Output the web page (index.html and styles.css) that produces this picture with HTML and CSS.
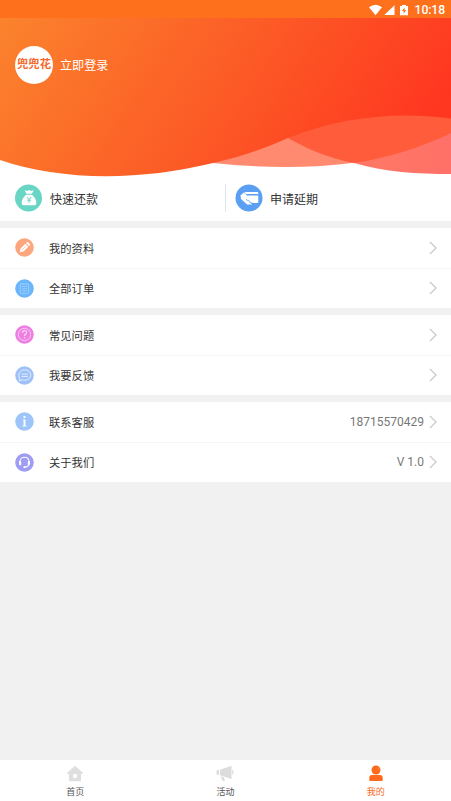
FILE: index.html
```
<!DOCTYPE html>
<html lang="zh-CN">
<head>
<meta charset="utf-8">
<title>我的</title>
<link rel="stylesheet" href="styles.css">
</head>
<body>
<div class="app">
  <div class="status">
    <svg width="41" height="14" viewBox="0 0 41 14" fill="#fff">
      <path d="M0 4.200Q6.500-.8 13 4.200L6.500 12.300Z"/>
      <path d="M25.500 2.300V12H15.300Z"/>
      <path fill-rule="evenodd" d="M31 3h2V2h4v1h2v9.200h-8ZM35.600 4.500 33 8h1.600v2.800L37.200 7h-1.600Z"/>
    </svg>
    <span class="clock">10:18</span>
  </div>
  <header class="hero">
    <svg class="waves" width="451" height="159" viewBox="0 18 451 159">
      <defs>
        <linearGradient id="sky" gradientUnits="userSpaceOnUse" x1="0" y1="18" x2="370" y2="260">
          <stop offset="0" stop-color="#fb832d"/>
          <stop offset=".5" stop-color="#fc5c26"/>
          <stop offset=".95" stop-color="#ff3620"/>
        </linearGradient>
        <linearGradient id="pink" x1="0" x2="1" y1="0" y2="0">
          <stop offset="0" stop-color="#ff7965"/>
          <stop offset="1" stop-color="#ff7068"/>
        </linearGradient>
      </defs>
      <path fill="#ff8a70" d="M213 162C240 157 263 148 288 137L310 140 356 162.500C308 169 260 168 213 163Z"/>
      <path fill="url(#pink)" d="M352 162C387 156 420 146 451 131V174C418 174 384 172 354 163Z"/>
      <path fill="#ff5c3b" d="M288 138L300 131C350 114 400 112 451 117V133C420 148 387 158 354 163C328 158 307 149 288 138Z"/>
      <path fill="url(#sky)" d="M0 18H451V118.500C395 111 340 117 288 138C263 149 240 157 213 163C136 182 58 180 0 160Z"/>
    </svg>
    <div class="profile">
      <div class="avatar"><span>兜兜花</span></div>
      <span class="login">立即登录</span>
    </div>
  </header>
  <section class="quick">
    <div class="quick-item">
      <svg width="28" height="28" viewBox="0 0 28 28">
        <circle cx="13.500" cy="14" r="13.500" fill="#68d5c5"/>
        <path fill="#fff" d="M9.600 6.200l2.500.8 2-1 2 1 2.600-.8-1.800 3.600h-5.500ZM11.200 10.700h5.800c2.700 2.100 4.300 5 4.300 8.100 0 1.800-.7 2.400-2.300 2.400H9c-1.600 0-2.300-.6-2.300-2.400 0-3.100 1.700-6 4.500-8.100Z"/>
        <path fill="none" stroke="#68d5c5" stroke-width="1" d="M12 13l2.100 2.500 2.100-2.500M14.100 15.500v3.500M12 16.200h4.200"/>
      </svg>
      <span>快速还款</span>
    </div>
    <div class="quick-item extend">
      <svg width="28" height="28" viewBox="0 0 28 28">
        <circle cx="14" cy="14" r="13.500" fill="#5b9ff2"/>
        <path fill="#fff" d="M9.500 8h12.800q1 0 1 1v1H11ZM12 11.500h11.300V18q0 1-1 1h-4.500ZM5.500 11.200 9 8.600l9.300 9.200-1.200 1-3.600-1.400 3.800 3.200h-5.200L6 15Z"/>
        <path fill="none" stroke="#5b9ff2" stroke-width=".8" d="M11 15.500l4 2"/>
      </svg>
      <span>申请延期</span>
    </div>
  </section>
  <section class="group">
    <div class="row">
      <svg class="icon" viewBox="0 0 20 20"><circle cx="10" cy="10" r="9.800" fill="#fda57c"/><path fill="#fff" d="m5 15 .9-4L10.800 6l3.200 3.200-5 4.900ZM11.500 5.300l1-.9q.6-.5 1.200 0l2 2q.5.6 0 1.200l-1 .9Z"/><path stroke="#fda57c" stroke-width=".6" d="m7.200 12.800 4.300-4.300"/></svg>
      <span class="label">我的资料</span>
      <svg class="arrow" viewBox="0 0 8 14"><path d="m1 1 6 6-6 6"/></svg>
    </div>
    <div class="row">
      <svg class="icon" viewBox="0 0 20 20"><circle cx="10" cy="10" r="9.800" fill="#6bb5fa"/><g fill="none" stroke="#a3d3ff" stroke-width=".9"><rect x="5.600" y="5.200" width="8.800" height="10" rx="1"/><path d="M7.500 4.500v1.500M12.500 4.500v1.500M7.500 8h5M7.500 10.300h5M7.500 12.600h5"/></g></svg>
      <span class="label">全部订单</span>
      <svg class="arrow" viewBox="0 0 8 14"><path d="m1 1 6 6-6 6"/></svg>
    </div>
  </section>
  <section class="group">
    <div class="row">
      <svg class="icon" viewBox="0 0 20 20"><circle cx="10" cy="10" r="9.800" fill="#ec7fe0"/><g fill="none" stroke="#ffd0fa"><circle cx="10" cy="10" r="6.500" stroke-width=".9"/><path stroke-width="1.300" d="M7.700 8.300Q7.900 6 10 6t2.300 2q0 1.100-1.400 1.900-.9.500-.9 1.600M10 12.700V14.200"/></g></svg>
      <span class="label">常见问题</span>
      <svg class="arrow" viewBox="0 0 8 14"><path d="m1 1 6 6-6 6"/></svg>
    </div>
    <div class="row">
      <svg class="icon" viewBox="0 0 20 20"><circle cx="10" cy="10" r="9.800" fill="#9fc1f8"/><g fill="none" stroke="#e2efff"><path d="M4.600 15.800 5 13C2.200 9 5.300 4 10.300 4c3.500 0 6.300 2.400 6.300 5.500s-2.800 5.600-6.300 5.600c-1 0-1.900-.2-2.700-.6Z"/><path d="M7 8.600h6.600M7 11h6.600"/></g></svg>
      <span class="label">我要反馈</span>
      <svg class="arrow" viewBox="0 0 8 14"><path d="m1 1 6 6-6 6"/></svg>
    </div>
  </section>
  <section class="group">
    <div class="row">
      <svg class="icon" viewBox="0 0 20 20"><circle cx="10" cy="10" r="9.800" fill="#9dc5fa"/><path fill="#fff" d="M9 4.300h2v2H9ZM8.300 7.800H11V14.200h1v1H8v-1h1V8.800h-.7Z"/></svg>
      <span class="label">联系客服</span>
      <span class="value">18715570429</span>
      <svg class="arrow" viewBox="0 0 8 14"><path d="m1 1 6 6-6 6"/></svg>
    </div>
    <div class="row">
      <svg class="icon" viewBox="0 0 20 20"><circle cx="10" cy="10" r="9.800" fill="#9f9cf4"/><path fill="none" stroke="#fff" stroke-width="1.100" d="M5.300 10V9C5.300 3 14.700 3 14.700 9v1.500c0 3-1.500 4.300-4.200 4.300"/><path fill="#fff" d="M4.300 8.500h1.200q1 0 1 1V12q0 1-1 1-1.200 0-1.200-1.200ZM15.700 8.500h-1.200q-1 0-1 1V12q0 1 1 1 1.200 0 1.200-1.200ZM9 13.900h2.300v1.800H9Z"/></svg>
      <span class="label">关于我们</span>
      <span class="value">V 1.0</span>
      <svg class="arrow" viewBox="0 0 8 14"><path d="m1 1 6 6-6 6"/></svg>
    </div>
  </section>
  <nav class="tabs">
    <div class="tab">
      <svg width="18" height="17" viewBox="0 0 18 17"><path fill="#dfdfdf" fill-rule="evenodd" d="M9 .8 17.200 8l-.8 1H15v6.500q0 .8-.8.8H3.800q-.8 0-.8-.8V9H1.600L.8 8ZM9 8.800a2.200 2.200 0 0 0 0 4.400 2.200 2.200 0 0 0 0-4.400Z"/></svg>
      <span>首页</span>
    </div>
    <div class="tab">
      <svg width="18" height="17" viewBox="0 0 18 17"><path fill="#dcdcdc" d="M.5 6.300q0-1 1-1.200l1.500-.3v5.300l-1.500-.4q-1-.3-1-1.300ZM4 4.700 15.500.8V14L4 10.300ZM16.200 4.500q1.300.6 1.300 2.700t-1.300 2.700ZM4.500 11.300l3.200 1 1.300 3q-1.800 1.500-2.600 0Z"/></svg>
      <span>活动</span>
    </div>
    <div class="tab active">
      <svg width="18" height="17" viewBox="0 0 18 17"><circle cx="9" cy="5" r="4.500" fill="#fd6a1d"/><path fill="#fd6a1d" d="M5 10h8q2.700 0 2.700 2.700v2.500q0 .8-.8.8H3.100q-.8 0-.8-.8v-2.500Q2.300 10 5 10Z"/><path fill="none" stroke="#ffb58c" stroke-width=".7" d="M10.500 2.500q1 .7 1 1.800"/></svg>
      <span>我的</span>
    </div>
  </nav>
</div>
</body>
</html>
```

FILE: styles.css
```
* { box-sizing: border-box; }

body {
  margin: 0;
  background: #f1f1f1;
  color: #333;
  font-family: Roboto, "Noto Sans CJK SC", sans-serif;
}

svg { display: block; flex: none; }

.app {
  display: flex;
  flex-direction: column;
  width: 451px;
  height: 801px;
  overflow: hidden;
}

.status {
  display: flex;
  flex: none;
  align-items: center;
  justify-content: flex-end;
  gap: 4px;
  height: 18px;
  padding: 2px 6px 0 0;
  background: #ff701d;
  color: #fff;
}

.status svg { margin-right: 1px; margin-top: -1px; }

.clock { font-size: 12.2px; font-weight: 500; line-height: 16px; letter-spacing: -0.1px; }

.hero {
  position: relative;
  flex: none;
  height: 159px;
  padding: 28px 15px 0;
  background: #fff;
}

.waves { position: absolute; top: 0; left: 0; }

.profile {
  position: relative;
  display: flex;
  align-items: center;
  gap: 7px;
  color: #fff;
}

.avatar {
  display: flex;
  align-items: center;
  justify-content: center;
  width: 38px;
  height: 38px;
  border-radius: 50%;
  background: #fff;
  color: #f4682d;
  font-size: 11.3px;
  font-weight: 700;
  line-height: 16px;
  white-space: nowrap;
}

.login { padding-top: 2px; font-size: 12.100px; line-height: 18px; }

.quick {
  display: flex;
  flex: none;
  height: 44px;
  background: #fff;
}

.quick-item {
  display: flex;
  align-items: center;
  flex: 0 0 225px;
  gap: 7px;
  height: 28px;
  margin-top: 7px;
  padding-left: 15px;
  font-size: 12px;
}

.extend {
  padding-left: 9px;
  border-left: 1px solid #dce6f0;
}

.group {
  flex: none;
  margin-top: 7.4px;
  background: #fff;
}

.row {
  display: flex;
  align-items: center;
  height: 39.8px;
  padding: 0 14px 1px 15px;
  font-size: 11.3px;
}

.row + .row { padding-bottom: 1px; border-top: 1px solid #f5f5f5; }

.icon { width: 19px; height: 19px; margin-right: 15px; }

.label { flex: 1; }

.value { margin-right: 5px; color: #777; font-size: 12px; }

.arrow {
  width: 8px;
  height: 14px;
  fill: none;
  stroke: #c8c8c8;
  stroke-width: 1.2;
}

.tabs {
  display: flex;
  flex: none;
  height: 41px;
  margin-top: auto;
  background: #fff;
}

.tab {
  display: flex;
  flex: 1;
  flex-direction: column;
  align-items: center;
  gap: 4px;
  padding-top: 5px;
  color: #555;
  font-size: 9px;
  line-height: 13px;
}

.active { color: #fd6a1d; }
```
